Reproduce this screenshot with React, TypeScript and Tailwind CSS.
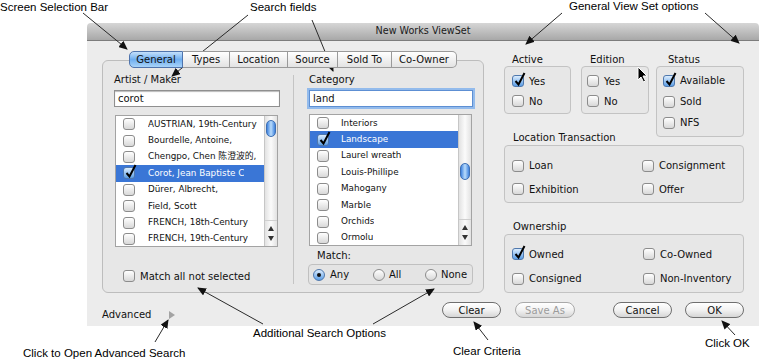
import React from "react";

const artists = [
  { name: "AUSTRIAN, 19th-Century" },
  { name: "Bourdelle, Antoine," },
  { name: "Chengpo, Chen 陈澄波的," },
  { name: "Corot, Jean Baptiste C", on: true },
  { name: "Dürer, Albrecht," },
  { name: "Field, Scott" },
  { name: "FRENCH, 18th-Century" },
  { name: "FRENCH, 19th-Century" },
];

const categories = [
  { name: "Interiors" },
  { name: "Landscape", on: true },
  { name: "Laurel wreath" },
  { name: "Louis-Phillipe" },
  { name: "Mahogany" },
  { name: "Marble" },
  { name: "Orchids" },
  { name: "Ormolu" },
];

const tabs = [
  { label: "General", w: "w-[54px]", on: true },
  { label: "Types", w: "w-[47px]" },
  { label: "Location", w: "w-[58px]" },
  { label: "Source", w: "w-[50px]" },
  { label: "Sold To", w: "w-[54px]" },
  { label: "Co-Owner", w: "w-[65px]" },
];

// annotation arrows: [x1, y1, x2, y2], head at the second point
const arrows = [
  [83, 13, 127, 49],
  [248, 15, 172, 76],
  [312, 20, 333, 71],
  [562, 13, 526, 44],
  [705, 13, 739, 43],
  [263, 324, 198, 288],
  [373, 324, 434, 289],
  [155, 342, 168, 320],
  [488, 340, 474, 322],
  [735, 335, 722, 321],
];

function Check({ on = false }: { on?: boolean }) {
  return (
    <span
      className={`relative inline-block h-[12px] w-[12px] shrink-0 rounded-[3px] border ${
        on
          ? "border-[#4f78ad] bg-linear-to-b from-[#dcedfd] to-[#5b9ee6]"
          : "border-[#8c8c8c] bg-linear-to-b from-white to-[#d8d8d8]"
      }`}
    >
      {on && (
        <svg className="absolute left-[1px] top-[-4px]" width="12" height="15" viewBox="0 0 12 15">
          <path d="M1.5 9 L4.5 12.5 L10.5 1" fill="none" stroke="#000" strokeWidth="2" />
        </svg>
      )}
    </span>
  );
}

function Radio({ on = false }: { on?: boolean }) {
  return (
    <span
      className={`flex h-[12px] w-[12px] shrink-0 items-center justify-center rounded-full border ${
        on
          ? "border-[#4f78ad] bg-linear-to-b from-[#dcedfd] to-[#5b9ee6]"
          : "border-[#8c8c8c] bg-linear-to-b from-white to-[#d8d8d8]"
      }`}
    >
      {on && <span className="h-[4px] w-[4px] rounded-full bg-[#111]" />}
    </span>
  );
}

function Opt({ label, on, h = "h-[20px]" }: { label: string; on?: boolean; h?: string }) {
  return (
    <div className={`flex items-center gap-[5px] ${h}`}>
      <Check on={on} />
      <span>{label}</span>
    </div>
  );
}

function ScrollBar({ thumb }: { thumb: string }) {
  return (
    <div className="flex h-full w-[13px] flex-col border-l border-[#c6c6c6] bg-linear-to-r from-[#e2e2e2] via-[#fbfbfb] to-[#e2e2e2]">
      <div className="flex-1">
        <div
          className={`ml-[1px] h-[17px] w-[10px] rounded-full border border-[#3d6fb3] bg-linear-to-r from-[#3f82dd] via-[#b9dcfb] to-[#3f82dd] ${thumb}`}
        />
      </div>
      <div className="flex h-[26px] flex-col items-center justify-center gap-[5px] border-t border-[#cfcfcf]">
        <svg width="6" height="5" viewBox="0 0 6 5">
          <path d="M3 0 L6 5 L0 5 Z" fill="#333" />
        </svg>
        <svg width="6" height="5" viewBox="0 0 6 5">
          <path d="M0 0 L6 0 L3 5 Z" fill="#333" />
        </svg>
      </div>
    </div>
  );
}

function CheckList({
  items,
  thumb,
  textPad,
}: {
  items: { name: string; on?: boolean }[];
  thumb: string;
  textPad: string;
}) {
  return (
    <div className="flex h-[132px] border border-[#a3a3a3] bg-white">
      <div className="flex-1">
        {items.map((it) => (
          <div
            key={it.name}
            className={`flex h-[16.4px] items-center pl-[7px] text-[8.8px] ${
              it.on ? "bg-[#3a76d6] text-white" : "text-[#111]"
            }`}
          >
            <Check on={it.on} />
            <span className={`truncate whitespace-nowrap ${textPad}`}>{it.name}</span>
          </div>
        ))}
      </div>
      <ScrollBar thumb={thumb} />
    </div>
  );
}

function Group({ className, children }: { className: string; children: React.ReactNode }) {
  return (
    <div className={`rounded-[4px] border border-[#c3c3c3] bg-[#e7e7e7] ${className}`}>{children}</div>
  );
}

function PillButton({ label, w, off }: { label: string; w: string; off?: boolean }) {
  return (
    <div
      className={`flex h-[16px] items-center justify-center rounded-full border bg-linear-to-b from-white via-[#f2f2f2] to-[#d6d6d6] ${w} ${
        off ? "border-[#a9a9a9] text-[#9b9b9b]" : "border-[#6f6f6f] text-[#111]"
      }`}
    >
      {label}
    </div>
  );
}

export default function App() {
  return (
    <div className="relative h-[360px] w-[772px] overflow-hidden bg-white font-['DejaVu_Sans','Noto_Sans_CJK_SC',sans-serif] text-[10px] text-[#111]">
      <div className="ml-[87px] pt-[23px] w-[672px]">
        {/* title bar */}
        <div className="flex h-[18px] items-center justify-center rounded-t-[4px] border-b border-[#7c7c7c] bg-linear-to-b from-[#d6d6d6] to-[#a8a8a8] text-[9.6px] text-[#1a1a1a]">
          New Works ViewSet
        </div>

        {/* window body */}
        <div className="flex h-[285px] flex-col bg-[#ececec]">
          <div className="flex pl-[15px] pt-[10px]">
            {/* left tab view */}
            <div className="flex w-[382px] flex-col items-center">
              <div className="relative z-10 flex h-[17px]">
                {tabs.map((t, i) => (
                  <div
                    key={t.label}
                    className={`flex items-center justify-center border-y ${t.w} ${
                      i === 0 ? "rounded-l-[5px] border-l" : ""
                    } ${i === tabs.length - 1 ? "rounded-r-[5px] border-r" : "border-r"} ${
                      t.on
                        ? "border-[#4f74ad] bg-linear-to-b from-[#c4e0fb] via-[#6eaef0] to-[#a8d3f8]"
                        : "border-[#9a9a9a] bg-linear-to-b from-white to-[#e3e3e3]"
                    }`}
                  >
                    {t.label}
                  </div>
                ))}
              </div>
              <div className="-mt-[8px] flex h-[233px] w-full rounded-[6px] border border-[#bdbdbd] bg-[#e7e7e7] pl-[11px] pt-[13px]">
                {/* artist column */}
                <div className="flex w-[166px] flex-col">
                  <div className="h-[12px] leading-[12px]">Artist / Maker</div>
                  <div className="mt-[4px] flex h-[17px] items-center border border-[#8f8f8f] bg-white pl-[3px] shadow-[inset_0_1px_1px_#bbb]">
                    corot
                  </div>
                  <div className="ml-[1px] mt-[8px] w-[163px]">
                    <CheckList items={artists} thumb="mt-[4px]" textPad="ml-[13px]" />
                  </div>
                  <div className="ml-[9px] mt-[23px]">
                    <Opt label="Match all not selected" h="h-[12px]" />
                  </div>
                </div>

                <div className="ml-[13px] mt-[1px] h-[209px] w-px bg-[#c4c4c4]" />

                {/* category column */}
                <div className="ml-[15px] flex w-[164px] flex-col">
                  <div className="h-[12px] leading-[12px]">Category</div>
                  <div className="mt-[4px] flex h-[17px] items-center border border-[#5d8fd3] bg-white pl-[3px] shadow-[0_0_0_2px_#93bbec]">
                    land
                  </div>
                  <div className="mt-[7px] w-[163px]">
                    <CheckList items={categories} thumb="mt-[48px]" textPad="ml-[12px]" />
                  </div>
                  <div className="ml-[8px] mt-[4px] h-[12px] leading-[12px]">Match:</div>
                  <div className="-ml-[1px] mt-[2px] flex h-[21px] w-[165px] items-center rounded-[4px] border border-[#c0c0c0] bg-[#e4e4e4] pl-[4px]">
                    <div className="flex w-[60px] items-center gap-[5px]">
                      <Radio on />
                      <span>Any</span>
                    </div>
                    <div className="flex w-[52px] items-center gap-[4px]">
                      <Radio />
                      <span>All</span>
                    </div>
                    <div className="flex items-center gap-[4px]">
                      <Radio />
                      <span>None</span>
                    </div>
                  </div>
                </div>
              </div>
            </div>

            {/* right column */}
            <div className="ml-[20px] mt-[3px] flex w-[240px] flex-col">
              <div className="flex items-start">
                <div className="w-[67px]">
                  <div className="h-[12px] pl-[8px] leading-[12px]">Active</div>
                  <Group className="h-[48px] pl-[7px] pt-[4px]">
                    <Opt label="Yes" on />
                    <Opt label="No" />
                  </Group>
                </div>
                <div className="ml-[10px] w-[68px]">
                  <div className="h-[12px] pl-[9px] leading-[12px]">Edition</div>
                  <Group className="h-[48px] pl-[5px] pt-[4px]">
                    <Opt label="Yes" />
                    <Opt label="No" />
                  </Group>
                </div>
                <div className="ml-[7px] w-[88px]">
                  <div className="h-[12px] pl-[12px] leading-[12px]">Status</div>
                  <Group className="h-[71px] pl-[6px] pt-[3px]">
                    <Opt label="Available" on h="h-[21px]" />
                    <Opt label="Sold" h="h-[21px]" />
                    <Opt label="NFS" h="h-[21px]" />
                  </Group>
                </div>
              </div>

              <div className="-mt-[5px] h-[12px] pl-[9px] leading-[12px]">Location Transaction</div>
              <Group className="mt-[1px] grid h-[58px] grid-cols-[130px_1fr] pl-[7px] pt-[9px]">
                <Opt label="Loan" h="h-[21px]" />
                <Opt label="Consignment" h="h-[21px]" />
                <Opt label="Exhibition" h="h-[21px]" />
                <Opt label="Offer" h="h-[21px]" />
              </Group>

              <div className="mt-[18px] h-[12px] pl-[9px] leading-[12px]">Ownership</div>
              <Group className="mt-[1px] grid h-[59px] grid-cols-[131px_1fr] pl-[7px] pt-[8px]">
                <Opt label="Owned" on h="h-[22px]" />
                <Opt label="Co-Owned" h="h-[22px]" />
                <Opt label="Consigned" h="h-[22px]" />
                <Opt label="Non-Inventory" h="h-[22px]" />
              </Group>
            </div>
          </div>

          {/* bottom row */}
          <div className="mt-[9px] flex items-start pl-[15px]">
            <div className="flex w-[340px] items-center pt-[7px]">
              <span className="leading-[12px]">Advanced</span>
              <svg className="ml-[18px]" width="6" height="8" viewBox="0 0 6 8">
                <path d="M0 0 L6 4 L0 8 Z" fill="#a3a3a3" />
              </svg>
            </div>
            <PillButton label="Clear" w="w-[59px]" />
            <div className="ml-[14px]">
              <PillButton label="Save As" w="w-[60px]" off />
            </div>
            <div className="ml-[38px]">
              <PillButton label="Cancel" w="w-[59px]" />
            </div>
            <div className="ml-[13px]">
              <PillButton label="OK" w="w-[59px]" />
            </div>
          </div>
        </div>
      </div>

      {/* mouse pointer over the dialog */}
      <svg className="absolute left-[637px] top-[66px]" width="11" height="17" viewBox="0 0 11 17">
        <path d="M1 1 L1 14 L4 11 L6.5 16 L8.5 15 L6 10 L10 10 Z" fill="#000" stroke="#fff" strokeWidth="1" />
      </svg>

      {/* annotations */}
      <div className="absolute inset-0 font-['Liberation_Sans',Arial,sans-serif] text-[11.5px] leading-[14px] text-black">
        <span className="absolute left-[0px] top-[0px]">Screen Selection Bar</span>
        <span className="absolute left-[250px] top-[0px]">Search fields</span>
        <span className="absolute left-[569px] top-[-1px]">General View Set options</span>
        <span className="absolute left-[253px] top-[326px]">Additional Search Options</span>
        <span className="absolute left-[23px] top-[346px]">Click to Open Advanced Search</span>
        <span className="absolute left-[453px] top-[344px]">Clear Criteria</span>
        <span className="absolute left-[705px] top-[336px]">Click OK</span>
      </div>
      <svg className="absolute left-0 top-0" width="772" height="360" viewBox="0 0 772 360">
        <defs>
          <marker id="head" markerWidth="9" markerHeight="8" refX="8" refY="4" orient="auto" markerUnits="userSpaceOnUse">
            <path d="M0 0 L9 4 L0 8 Z" fill="#111" />
          </marker>
        </defs>
        {arrows.map(([x1, y1, x2, y2], i) => (
          <line key={i} x1={x1} y1={y1} x2={x2} y2={y2} stroke="#2a2a2a" strokeWidth="1" markerEnd="url(#head)" />
        ))}
      </svg>
    </div>
  );
}
